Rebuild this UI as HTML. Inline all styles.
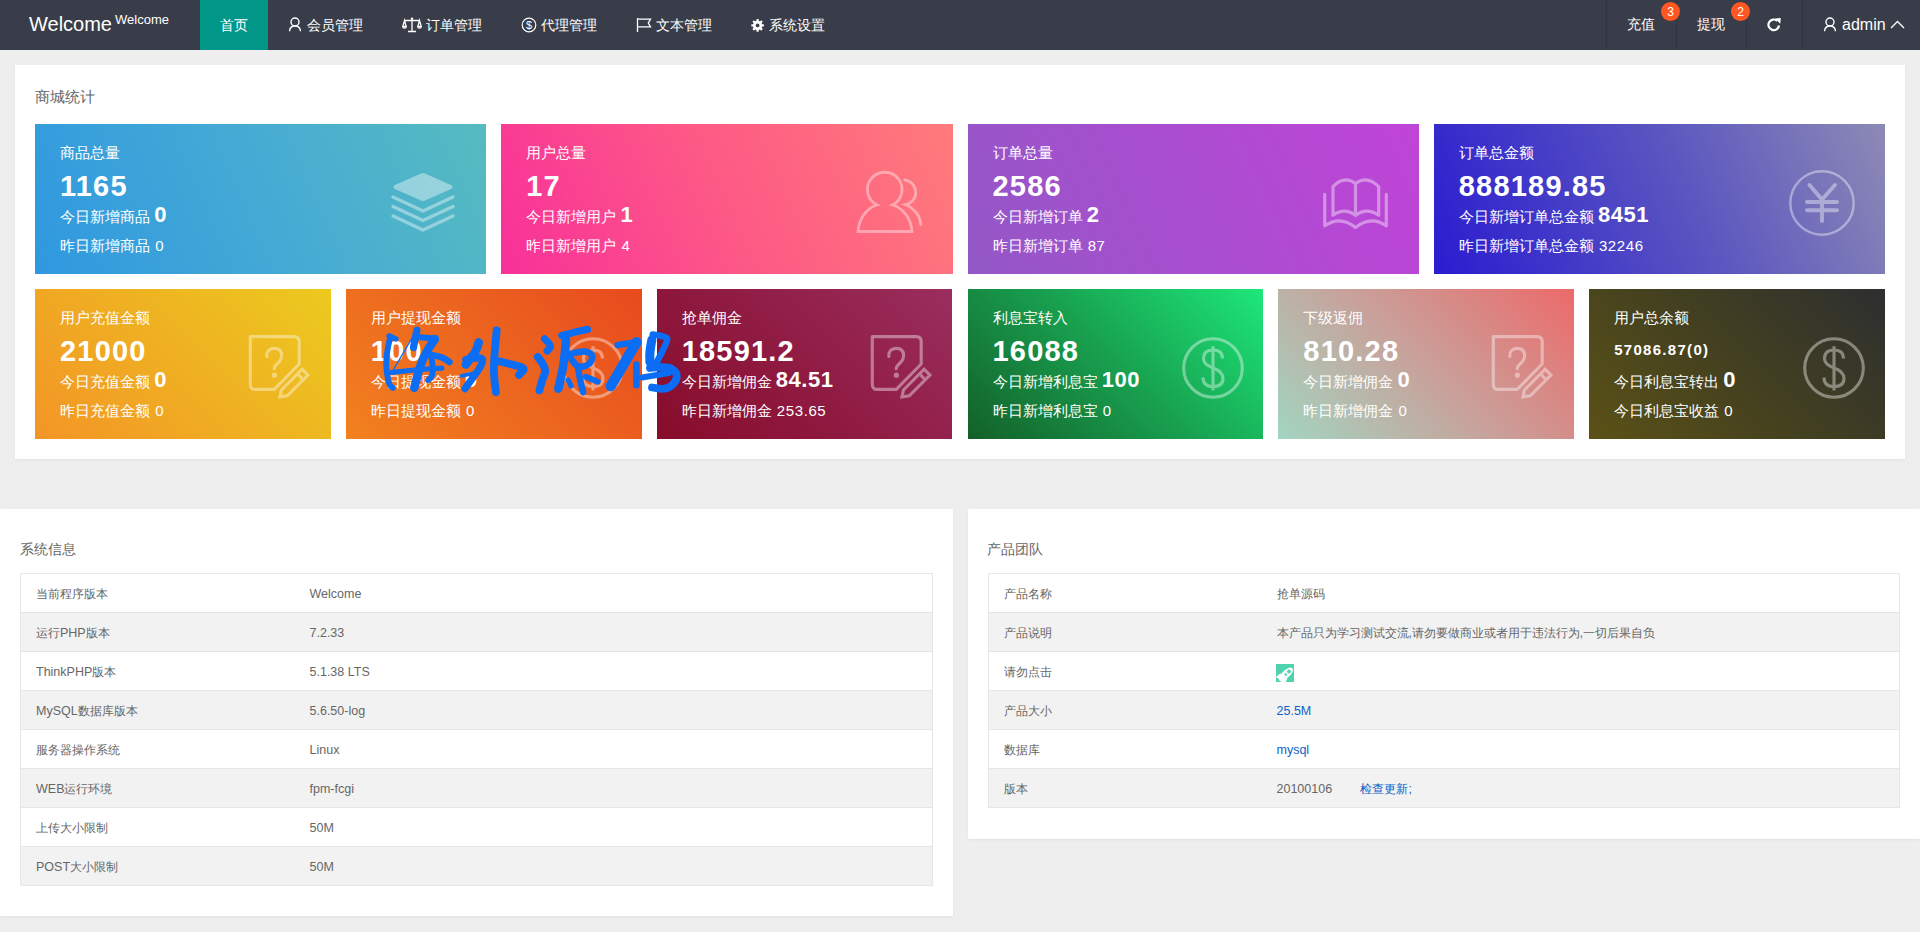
<!DOCTYPE html><html><head><meta charset='utf-8'><title>Welcome</title><style>
*{margin:0;padding:0;box-sizing:border-box}
html,body{width:1920px;height:932px;overflow:hidden}
body{background:#eeeeee;font-family:'Liberation Sans', sans-serif;position:relative}
.a{position:absolute;white-space:nowrap}
.hdr{left:0;top:0;width:1920px;height:50px;background:#393D49}
.nav{color:#fff;font-size:14px;line-height:16px}
.sep{top:0;width:1px;height:50px;background:#30343e}
.badge{width:19px;height:19px;border-radius:50%;background:#FF5722;color:#fff;font-size:12px;line-height:21px;text-align:center}
.panel{background:#fff;box-shadow:0 1px 2px 0 rgba(0,0,0,.06)}
.ptitle{color:#666;font-size:14px;line-height:16px}
.card{color:#fff;overflow:hidden}
.ct{font-size:15px;line-height:17px}
.cn{font-size:29px;line-height:30px;font-weight:bold;letter-spacing:1.2px}
.cl{font-size:15px;line-height:17px}
.cb{font-weight:bold;font-size:22px;letter-spacing:.5px}
.cv{letter-spacing:.6px;margin-left:1px}
.tbl{border-collapse:collapse;table-layout:fixed;font-size:12px;color:#666}
.l{font-size:12.5px}
.tbl{border:1px solid #e6e6e6}
.tbl td{border-top:1px solid #e6e6e6;border-bottom:1px solid #e6e6e6;height:39px;padding:1px 15px 0;line-height:20px;vertical-align:middle}
.tbl tr:nth-child(even) td{background:#f2f2f2}
.blue{color:#0D62C9}
</style></head><body>
<div class='a hdr'></div>
<div class='a' style='left:29px;top:12px;color:#fff;font-size:20px;line-height:24px'>Welcome</div>
<div class='a' style='left:115px;top:12px;color:#fff;font-size:13px;line-height:15px'>Welcome</div>
<div class='a' style='left:200px;top:0;width:68px;height:50px;background:#009688'></div>
<div class='a nav' style='left:220px;top:17px'>首页</div>
<div class='a nav' style='left:307px;top:17px'>会员管理</div>
<div class='a nav' style='left:426px;top:17px'>订单管理</div>
<div class='a nav' style='left:541px;top:17px'>代理管理</div>
<div class='a nav' style='left:656px;top:17px'>文本管理</div>
<div class='a nav' style='left:769px;top:17px'>系统设置</div>
<svg class='a' style='left:288px;top:17px' width='14' height='15' viewBox='0 0 14 15'><circle cx='7' cy='5' r='4' fill='none' stroke='#ffffff' stroke-width='1.4'/><path d='M1.5 14.2 C1.8 10.5 4 9 7 9 C10 9 12.2 10.5 12.5 14.2' fill='none' stroke='#ffffff' stroke-width='1.4'/></svg>
<svg class='a' style='left:402px;top:17px' width='20' height='16' viewBox='0 0 20 16'><g fill='none' stroke='#ffffff' stroke-width='1.3'><path d='M10 1.5 V14.5 M6 14.5 H14 M2.5 3.5 H17.5'/><path d='M2.5 3.5 L0.8 9.5 H4.2 Z'/><path d='M17.5 3.5 L15.8 9.5 H19.2 Z'/><path d='M0.8 9.5 A1.7 1.7 0 0 0 4.2 9.5 M15.8 9.5 A1.7 1.7 0 0 0 19.2 9.5'/></g><circle cx='10' cy='1.6' r='1.2' fill='#ffffff'/></svg>
<svg class='a' style='left:521px;top:17px' width='16' height='16' viewBox='0 0 16 16'><circle cx='8' cy='8' r='6.8' fill='none' stroke='#ffffff' stroke-width='1.2'/><text x='8' y='12' text-anchor='middle' font-size='11' fill='#ffffff' font-family="Liberation Sans">$</text></svg>
<svg class='a' style='left:636px;top:17px' width='16' height='16' viewBox='0 0 16 16'><path d='M1.5 1 V15 M1.5 2.2 H14.5 L12.3 6 L14.5 9.8 H1.5' fill='none' stroke='#ffffff' stroke-width='1.3'/></svg>
<svg class='a' style='left:751px;top:18.5px' width='14' height='13' viewBox='0 0 14 13'><g fill='#ffffff'><circle cx='6.6' cy='6.4' r='4.6'/><rect x='5.5' y='0.1' width='2.2' height='12.6' transform='rotate(0 6.6 6.4)'/><rect x='5.5' y='0.1' width='2.2' height='12.6' transform='rotate(45 6.6 6.4)'/><rect x='5.5' y='0.1' width='2.2' height='12.6' transform='rotate(90 6.6 6.4)'/><rect x='5.5' y='0.1' width='2.2' height='12.6' transform='rotate(135 6.6 6.4)'/></g><circle cx='6.6' cy='6.4' r='1.9' fill='#393D49'/></svg>
<div class='a sep' style='left:1606px'></div>
<div class='a sep' style='left:1676px'></div>
<div class='a sep' style='left:1746px'></div>
<div class='a sep' style='left:1802px'></div>
<div class='a nav' style='left:1627px;top:16px'>充值</div>
<div class='a nav' style='left:1697px;top:16px'>提现</div>
<div class='a badge' style='left:1661px;top:1.5px'>3</div>
<div class='a badge' style='left:1731px;top:1.5px'>2</div>
<svg class='a' style='left:1766px;top:17px' width='16' height='16' viewBox='0 0 16 16'><path d='M13 8.5 A5.3 5.3 0 1 1 11.2 3.8' fill='none' stroke='#ffffff' stroke-width='2.2'/><path d='M9 1.5 L14.8 1 L14.3 6.8 Z' fill='#ffffff'/></svg>
<svg class='a' style='left:1823px;top:17px' width='14' height='15' viewBox='0 0 14 15'><circle cx='7' cy='5' r='4' fill='none' stroke='#ffffff' stroke-width='1.4'/><path d='M1.5 14.2 C1.8 10.5 4 9 7 9 C10 9 12.2 10.5 12.5 14.2' fill='none' stroke='#ffffff' stroke-width='1.4'/></svg>
<div class='a' style='left:1842px;top:15px;color:#fff;font-size:16px;line-height:19px'>admin</div>
<svg class='a' style='left:1890px;top:20px' width='15' height='9' viewBox='0 0 15 9'><path d='M1 8 L7.5 1.5 L14 8' fill='none' stroke='#ffffff' stroke-width='1.4'/></svg>
<div class='a panel' style='left:15px;top:65px;width:1890px;height:394px'></div>
<div class='a ptitle' style='left:35px;top:88px;font-size:15px;line-height:17px'>商城统计</div>
<div class='a card' style='left:35px;top:124px;width:451.25px;height:150px;background:linear-gradient(66deg,#2f98e0 0%,#47acd3 55%,#56bbbf 100%)'></div>
<div class='a' style='left:390px;top:172px;opacity:0.4'><svg width='70' height='64' viewBox='0 0 70 64'><g fill='#fff'><path d='M31 1.5 Q33 0.5 35 1.5 L61 13 Q64 15 61 17 L35 28.5 Q33 29.5 31 28.5 L5 17 Q2 15 5 13 Z'/></g><g fill='none' stroke='#fff' stroke-width='3.2' stroke-linecap='round' stroke-linejoin='round'><path d='M3 25 L33 39 L63 25'/><path d='M3 34.5 L33 48.5 L63 34.5'/><path d='M3 44 L33 58 L63 44'/></g></svg></div>
<div class='a card ct' style='left:60px;top:144px'>商品总量</div>
<div class='a card cn' style='left:60px;top:171px'>1165</div>
<div class='a card cl' style='left:60px;top:206px'>今日新增商品 <span class='cb'>0</span></div>
<div class='a card cl' style='left:60px;top:237px'>昨日新增商品 <span class='cv'>0</span></div>
<div class='a card' style='left:501.25px;top:124px;width:451.25px;height:150px;background:linear-gradient(66deg,#f8309a 0%,#fd5a85 50%,#ff7b7b 100%)'></div>
<div class='a' style='left:851px;top:170px;opacity:0.4'><svg width='72' height='66' viewBox='0 0 72 66'><g fill='none' stroke='#fff' stroke-width='2.8' stroke-linecap='round' transform='translate(0,2)'><path d='M26 33 A17.3 17.3 0 1 1 41.5 33 C52 36 60 46 61 59.5 L7 59.5 C8 46 16 36 26 33 Z'/><path d='M53.7 8 A12.5 12.5 0 0 1 54.6 32.7 C63 36 69.5 44 69.7 52.7'/></g></svg></div>
<div class='a card ct' style='left:526.25px;top:144px'>用户总量</div>
<div class='a card cn' style='left:526.25px;top:171px'>17</div>
<div class='a card cl' style='left:526.25px;top:206px'>今日新增用户 <span class='cb'>1</span></div>
<div class='a card cl' style='left:526.25px;top:237px'>昨日新增用户 <span class='cv'>4</span></div>
<div class='a card' style='left:967.5px;top:124px;width:451.25px;height:150px;background:linear-gradient(66deg,#9358c6 0%,#aa4dd0 50%,#c044d8 100%)'></div>
<div class='a' style='left:1320px;top:177px;opacity:0.4'><svg width='70' height='56' viewBox='0 0 70 56'><g fill='none' stroke='#fff' stroke-width='3.2' stroke-linecap='round' stroke-linejoin='round'><path d='M4.7 17.4 V48.8 Q20 38 35.5 50.4 Q51 38 66.3 48.8 V17.4'/><path d='M13 38.3 V9.7 Q24 -2 35.5 6.5 Q47 -2 58.7 9.7 V38.3 Q47 30 35.5 38.3 Q24 30 13 38.3 Z'/><path d='M35.5 6.5 V38.3'/></g></svg></div>
<div class='a card ct' style='left:992.5px;top:144px'>订单总量</div>
<div class='a card cn' style='left:992.5px;top:171px'>2586</div>
<div class='a card cl' style='left:992.5px;top:206px'>今日新增订单 <span class='cb'>2</span></div>
<div class='a card cl' style='left:992.5px;top:237px'>昨日新增订单 <span class='cv'>87</span></div>
<div class='a card' style='left:1433.75px;top:124px;width:451.25px;height:150px;background:linear-gradient(66deg,#2a1cd0 0%,#5a55c0 55%,#8d8ab5 100%)'></div>
<div class='a' style='left:1787px;top:168px;opacity:0.4'><svg width='70' height='70' viewBox='0 0 70 70'><g fill='none' stroke='#fff' stroke-linecap='round'><circle cx='35' cy='35' r='31.7' stroke-width='2.4'/><path d='M22.5 17 L35 31.5 L48 17 M20 34 H50 M20 42.2 H50 M35 31.5 V53' stroke-width='3.9'/></g></svg></div>
<div class='a card ct' style='left:1458.75px;top:144px'>订单总金额</div>
<div class='a card cn' style='left:1458.75px;top:171px'>888189.85</div>
<div class='a card cl' style='left:1458.75px;top:206px'>今日新增订单总金额 <span class='cb'>8451</span></div>
<div class='a card cl' style='left:1458.75px;top:237px'>昨日新增订单总金额 <span class='cv'>32246</span></div>
<div class='a card' style='left:35px;top:289px;width:295.83px;height:150px;background:linear-gradient(45deg,#f39526 0%,#efb022 50%,#ecca1e 100%)'></div>
<div class='a' style='left:240px;top:325px;opacity:0.4'><svg width='80' height='80' viewBox='0 0 80 80'><g fill='none' stroke='#fff' stroke-width='3.1' stroke-linejoin='miter'><path d='M10.3 11.6 H54.2 Q59.2 11.6 59.2 16.6 V39 L34.3 64.4 H15.3 Q10.3 64.4 10.3 59.4 Z' stroke-linejoin='round'/><path d='M26.8 31.5 Q26.5 23.4 34.2 23.4 Q41.6 23.4 41.6 30.5 Q41.6 35 37 39 Q34.2 41.5 34.2 43.8' stroke-linecap='round'/><path d='M62.15 44.25 L67.95 50.05 L47.25 70.75 L40 71.8 L41.45 64.95 Z'/><path d='M57.45 48.95 L63.25 54.75'/></g><circle cx='34.4' cy='50.2' r='2.6' fill='#fff'/></svg></div>
<div class='a card ct' style='left:60px;top:309px'>用户充值金额</div>
<div class='a card cn' style='left:60px;top:336px'>21000</div>
<div class='a card cl' style='left:60px;top:371px'>今日充值金额 <span class='cb'>0</span></div>
<div class='a card cl' style='left:60px;top:402px'>昨日充值金额 <span class='cv'>0</span></div>
<div class='a card' style='left:345.83px;top:289px;width:295.83px;height:150px;background:linear-gradient(45deg,#f2811f 0%,#ec661f 50%,#e84a1e 100%)'></div>
<div class='a' style='left:558px;top:333px;opacity:0.4'><svg width='70' height='70' viewBox='0 0 70 70'><g fill='none' stroke='#fff' stroke-width='3.1'><circle cx='35' cy='35' r='29.3'/><path d='M35 13.2 V57.4'/><path d='M44.5 25.5 Q44.5 17 35 17 Q25.5 17 25.5 25.5 Q25.5 31.5 35 35 Q45 38.5 45 45.5 Q45 53.5 35 53.5 Q25 53.5 25 44.5'/></g></svg></div>
<div class='a card ct' style='left:370.83px;top:309px'>用户提现金额</div>
<div class='a card cn' style='left:370.83px;top:336px'>100</div>
<div class='a card cl' style='left:370.83px;top:371px'>今日提现金额 <span class='cb'>0</span></div>
<div class='a card cl' style='left:370.83px;top:402px'>昨日提现金额 <span class='cv'>0</span></div>
<div class='a card' style='left:656.67px;top:289px;width:295.83px;height:150px;background:linear-gradient(45deg,#870c2a 0%,#901c44 50%,#9a2e5e 100%)'></div>
<div class='a' style='left:862px;top:325px;opacity:0.4'><svg width='80' height='80' viewBox='0 0 80 80'><g fill='none' stroke='#fff' stroke-width='3.1' stroke-linejoin='miter'><path d='M10.3 11.6 H54.2 Q59.2 11.6 59.2 16.6 V39 L34.3 64.4 H15.3 Q10.3 64.4 10.3 59.4 Z' stroke-linejoin='round'/><path d='M26.8 31.5 Q26.5 23.4 34.2 23.4 Q41.6 23.4 41.6 30.5 Q41.6 35 37 39 Q34.2 41.5 34.2 43.8' stroke-linecap='round'/><path d='M62.15 44.25 L67.95 50.05 L47.25 70.75 L40 71.8 L41.45 64.95 Z'/><path d='M57.45 48.95 L63.25 54.75'/></g><circle cx='34.4' cy='50.2' r='2.6' fill='#fff'/></svg></div>
<div class='a card ct' style='left:681.67px;top:309px'>抢单佣金</div>
<div class='a card cn' style='left:681.67px;top:336px'>18591.2</div>
<div class='a card cl' style='left:681.67px;top:371px'>今日新增佣金 <span class='cb'>84.51</span></div>
<div class='a card cl' style='left:681.67px;top:402px'>昨日新增佣金 <span class='cv'>253.65</span></div>
<div class='a card' style='left:967.5px;top:289px;width:295.83px;height:150px;background:linear-gradient(45deg,#136029 0%,#18a04f 50%,#1de77a 100%)'></div>
<div class='a' style='left:1178px;top:333px;opacity:0.4'><svg width='70' height='70' viewBox='0 0 70 70'><g fill='none' stroke='#fff' stroke-width='3.1'><circle cx='35' cy='35' r='29.3'/><path d='M35 13.2 V57.4'/><path d='M44.5 25.5 Q44.5 17 35 17 Q25.5 17 25.5 25.5 Q25.5 31.5 35 35 Q45 38.5 45 45.5 Q45 53.5 35 53.5 Q25 53.5 25 44.5'/></g></svg></div>
<div class='a card ct' style='left:992.5px;top:309px'>利息宝转入</div>
<div class='a card cn' style='left:992.5px;top:336px'>16088</div>
<div class='a card cl' style='left:992.5px;top:371px'>今日新增利息宝 <span class='cb'>100</span></div>
<div class='a card cl' style='left:992.5px;top:402px'>昨日新增利息宝 <span class='cv'>0</span></div>
<div class='a card' style='left:1278.33px;top:289px;width:295.83px;height:150px;background:linear-gradient(45deg,#a3d5c0 0%,#c9a09a 50%,#ec6a6a 100%)'></div>
<div class='a' style='left:1483px;top:325px;opacity:0.4'><svg width='80' height='80' viewBox='0 0 80 80'><g fill='none' stroke='#fff' stroke-width='3.1' stroke-linejoin='miter'><path d='M10.3 11.6 H54.2 Q59.2 11.6 59.2 16.6 V39 L34.3 64.4 H15.3 Q10.3 64.4 10.3 59.4 Z' stroke-linejoin='round'/><path d='M26.8 31.5 Q26.5 23.4 34.2 23.4 Q41.6 23.4 41.6 30.5 Q41.6 35 37 39 Q34.2 41.5 34.2 43.8' stroke-linecap='round'/><path d='M62.15 44.25 L67.95 50.05 L47.25 70.75 L40 71.8 L41.45 64.95 Z'/><path d='M57.45 48.95 L63.25 54.75'/></g><circle cx='34.4' cy='50.2' r='2.6' fill='#fff'/></svg></div>
<div class='a card ct' style='left:1303.33px;top:309px'>下级返佣</div>
<div class='a card cn' style='left:1303.33px;top:336px'>810.28</div>
<div class='a card cl' style='left:1303.33px;top:371px'>今日新增佣金 <span class='cb'>0</span></div>
<div class='a card cl' style='left:1303.33px;top:402px'>昨日新增佣金 <span class='cv'>0</span></div>
<div class='a card' style='left:1589.17px;top:289px;width:295.83px;height:150px;background:linear-gradient(45deg,#5b5116 0%,#434020 50%,#2d2f30 100%)'></div>
<div class='a' style='left:1799px;top:333px;opacity:0.4'><svg width='70' height='70' viewBox='0 0 70 70'><g fill='none' stroke='#fff' stroke-width='3.1'><circle cx='35' cy='35' r='29.3'/><path d='M35 13.2 V57.4'/><path d='M44.5 25.5 Q44.5 17 35 17 Q25.5 17 25.5 25.5 Q25.5 31.5 35 35 Q45 38.5 45 45.5 Q45 53.5 35 53.5 Q25 53.5 25 44.5'/></g></svg></div>
<div class='a card ct' style='left:1614.17px;top:309px'>用户总余额</div>
<div class='a card' style='left:1614.17px;top:341px;font-size:15px;font-weight:bold;letter-spacing:1.3px;line-height:17px'>57086.87(0)</div>
<div class='a card cl' style='left:1614.17px;top:371px'>今日利息宝转出 <span class='cb'>0</span></div>
<div class='a card cl' style='left:1614.17px;top:402px'>今日利息宝收益 <span class='cv'>0</span></div>
<div class='a panel' style='left:0;top:509px;width:953px;height:407px'></div>
<div class='a panel' style='left:968px;top:509px;width:952px;height:330px'></div>
<div class='a ptitle' style='left:20px;top:541px'>系统信息</div>
<div class='a ptitle' style='left:987px;top:541px'>产品团队</div>
<table class='a tbl' style='left:20px;top:573px;width:913px'><colgroup><col style='width:274px'><col></colgroup><tr><td>当前程序版本</td><td><span class='l'>Welcome</span></td></tr><tr><td>运行<span class='l'>PHP</span>版本</td><td><span class='l'>7.2.33</span></td></tr><tr><td><span class='l'>ThinkPHP</span>版本</td><td><span class='l'>5.1.38 LTS</span></td></tr><tr><td><span class='l'>MySQL</span>数据库版本</td><td><span class='l'>5.6.50-log</span></td></tr><tr><td>服务器操作系统</td><td><span class='l'>Linux</span></td></tr><tr><td><span class='l'>WEB</span>运行环境</td><td><span class='l'>fpm-fcgi</span></td></tr><tr><td>上传大小限制</td><td><span class='l'>50M</span></td></tr><tr><td><span class='l'>POST</span>大小限制</td><td><span class='l'>50M</span></td></tr></table>
<table class='a tbl' style='left:988px;top:573px;width:912px'><colgroup><col style='width:273px'><col></colgroup><tr><td>产品名称</td><td>抢单源码</td></tr><tr><td>产品说明</td><td>本产品只为学习测试交流,请勿要做商业或者用于违法行为,一切后果自负</td></tr><tr><td>请勿点击</td><td><svg width='18' height='18' viewBox='0 0 18 18' style='vertical-align:middle;display:inline-block;position:relative;left:-1px;top:1px'><rect width='18' height='18' fill='#4ED3AE'/><path d='M1 12 Q3 9.5 5.5 9.5 Q9 5 14 3.5 Q17 3 17 6 Q16 11 11.5 13.5 Q11 16 9.5 18 L6 18 Q3 17 2 14 L0 14 Z' fill='#fff'/><circle cx='13' cy='7.5' r='1.9' fill='#4ED3AE'/><circle cx='9.8' cy='10.5' r='1.3' fill='#4ED3AE'/></svg></td></tr><tr><td>产品大小</td><td><span class='blue l'>25.5M</span></td></tr><tr><td>数据库</td><td><span class='blue l'>mysql</span></td></tr><tr><td>版本</td><td><span class='l'>20100106</span> <span class='blue' style='margin-left:25px'>检查更新;</span></td></tr></table>
<svg class='a' style='left:370px;top:320px' width='330' height='80' viewBox='0 0 330 80'><g fill='none' stroke='#0B6CF4' stroke-linecap='round' stroke-linejoin='round'><path d='M20.3 16.7 Q16.0 35.0 16.2 43.5 Q16.4 52.0 17.9 58.6 Q19.4 65.2 21.1 66.5 L22.9 67.8' stroke-width='5.9'/><path d='M19.0 16.0 L26.0 19.0' stroke-width='5.2'/><path d='M44.8 13.3 L22.9 50.6' stroke-width='1.3'/><path d='M46.9 10.3 Q45.0 20.0 44.2 23.8 L43.5 27.5' stroke-width='7.2'/><path d='M50.3 17.2 L64.9 18.5' stroke-width='5.9'/><path d='M64.9 18.9 Q58.1 28.3 54.2 36.5 Q50.3 44.6 47.3 56.2 L44.3 67.8' stroke-width='8.5'/><path d='M56.4 34.3 Q70.1 36.0 74.8 39.0 L79.5 42.0' stroke-width='6.5'/><path d='M61.5 37.8 Q64.1 54.1 61.1 57.1 L58.1 60.1' stroke-width='5.9'/><path d='M22.0 52.4 Q44.3 49.8 58.1 49.0 L71.8 48.1' stroke-width='5.2'/><path d='M108.7 22.3 Q107.0 30.0 103.2 34.8 Q99.3 39.5 97.6 42.1 L95.8 44.6' stroke-width='8.5'/><path d='M95.8 39.5 Q113.0 36.0 112.6 40.3 Q112.1 44.6 108.2 50.2 Q104.4 55.8 99.7 62.2 L95.0 68.7' stroke-width='7.2'/><path d='M91.5 55.8 L104.4 53.2' stroke-width='3.9'/><path d='M126.7 10.3 Q125.0 25.8 124.2 38.7 Q123.3 51.5 124.6 61.8 L125.9 72.1' stroke-width='7.8'/><path d='M128.5 41.2 Q143.0 44.6 149.4 46.4 Q155.9 48.1 152.4 51.5 L149.0 54.9' stroke-width='7.8'/><path d='M174.6 18.9 Q182.3 25.8 179.8 28.3 L177.2 30.9' stroke-width='7.2'/><path d='M167.7 36.9 Q177.2 48.1 174.6 54.1 Q172.0 60.1 170.7 65.2 L169.4 70.4' stroke-width='7.8'/><path d='M191.8 15.5 Q204.6 12.0 211.1 10.7 L217.5 9.4' stroke-width='7.2'/><path d='M196.0 19.7 Q194.3 42.9 191.3 55.8 L188.3 68.7' stroke-width='8.5'/><path d='M198.6 34.3 Q213.2 30.0 218.4 32.2 Q223.5 34.3 221.8 39.5 Q220.1 44.6 214.1 46.4 Q208.1 48.1 204.2 43.0 L200.3 37.8' stroke-width='6.5'/><path d='M208.1 48.1 Q210.0 60.0 211.6 66.1 L213.2 72.1' stroke-width='6.5'/><path d='M215.8 56.7 L227.8 61.8' stroke-width='5.9'/><path d='M198.0 60.0 L201.0 66.0' stroke-width='5.2'/><path d='M247.6 24.9 L266.4 22.3' stroke-width='6.5'/><path d='M266.4 22.3 Q254.4 42.9 247.6 54.5 L240.7 66.1' stroke-width='10.4'/><path d='M266.4 44.6 L266.4 65.2' stroke-width='6.5'/><path d='M282.7 14.6 Q297.3 16.3 297.3 18.9 Q297.3 21.5 292.1 31.8 L287.0 42.0' stroke-width='6.5'/><path d='M281.9 19.7 Q279.5 32.0 279.8 37.0 L280.0 42.0' stroke-width='9.1'/><path d='M280.0 48.0 Q297.3 46.0 302.1 49.0 Q307.0 52.0 306.8 56.5 Q306.6 61.0 301.9 65.3 Q297.3 69.7 289.6 68.6 L282.0 67.5' stroke-width='7.8'/><path d='M272.0 57.5 L299.0 53.0' stroke-width='5.9'/></g></svg>
</body></html>
